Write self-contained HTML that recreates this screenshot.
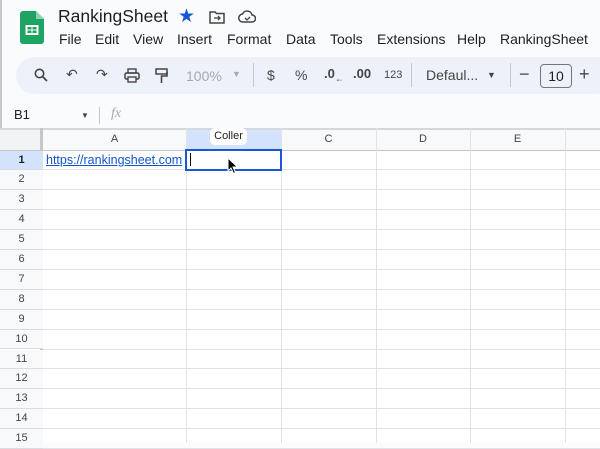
<!DOCTYPE html><html><head><style>
body{margin:0;width:600px;height:443px;overflow:hidden;background:#f9fbfd;font-family:"Liberation Sans",Arial,sans-serif;position:relative}
.a{position:absolute}
.m{position:absolute;top:31px;font-size:14px;color:#1f1f1f}
.tb{color:#444746;font-size:14px}
.rh{position:absolute;left:0;width:43px;text-align:center;font-size:11px;color:#444;border-bottom:1px solid #dadce0;background:#f8f9fa}
.hl{position:absolute;left:43px;width:557px;height:1px;background:#e1e3e6}
.vl{position:absolute;top:128px;width:1px;height:315px;background:#e1e3e6}
.ch{position:absolute;top:128px;height:22px;line-height:22px;text-align:center;font-size:11px;color:#444}
</style></head><body>
<div class="a" style="left:0;top:0;width:2px;height:443px;background:#c8c8c8"></div>
<svg class="a" style="left:20px;top:11px" width="24" height="33" viewBox="0 0 24 33"><path d="M3 0h13l8 8v22a3 3 0 0 1-3 3H3a3 3 0 0 1-3-3V3a3 3 0 0 1 3-3z" fill="#1ea362"/><path d="M16 0v8h8z" fill="#8ed1b1"/><rect x="5.5" y="14" width="13" height="10" fill="#fff"/><rect x="7.5" y="16" width="4" height="2.5" fill="#1ea362"/><rect x="12.5" y="16" width="4" height="2.5" fill="#1ea362"/><rect x="7.5" y="19.5" width="4" height="2.5" fill="#1ea362"/><rect x="12.5" y="19.5" width="4" height="2.5" fill="#1ea362"/></svg>
<div class="a" style="left:58px;top:6px;font-size:17.5px;color:#1f1f1f">RankingSheet</div>
<div class="a" style="left:178px;top:5px;font-size:19px;color:#1a57d2">★</div>
<svg class="a" style="left:209px;top:10px" width="16" height="14"><path d="M1 2h5l1.5 1.5H15V13H1z" fill="none" stroke="#444" stroke-width="1.5"/><path d="M5 8h6M9 6l2 2-2 2" stroke="#444" stroke-width="1.3" fill="none"/></svg>
<svg class="a" style="left:238px;top:10px" width="18" height="13"><path d="M5 12a4 4 0 0 1-.5-8A5 5 0 0 1 14 5a3.5 3.5 0 0 1 0 7z" fill="none" stroke="#444" stroke-width="1.5"/><path d="M7 8l2 2 3-3" fill="none" stroke="#444" stroke-width="1.3"/></svg>
<div class="m" style="left:59px">File</div><div class="m" style="left:95px">Edit</div><div class="m" style="left:133px">View</div><div class="m" style="left:177px">Insert</div><div class="m" style="left:227px">Format</div><div class="m" style="left:286px">Data</div><div class="m" style="left:330px">Tools</div><div class="m" style="left:377px">Extensions</div><div class="m" style="left:457px">Help</div><div class="m" style="left:500px">RankingSheet</div>
<div class="a" style="left:16px;top:57px;width:600px;height:37px;border-radius:19px;background:#edf2fa"></div>
<svg class="a" style="left:34px;top:68px" width="14" height="14"><circle cx="5.5" cy="5.5" r="4.2" fill="none" stroke="#444" stroke-width="1.6"/><path d="M8.5 8.5l4.5 4.5" stroke="#444" stroke-width="1.8"/></svg>
<div class="a tb" style="left:66px;top:66px">↶</div>
<div class="a tb" style="left:96px;top:66px">↷</div>
<svg class="a" style="left:124px;top:68px" width="16" height="15"><rect x="4" y="1" width="8" height="4" fill="none" stroke="#444" stroke-width="1.4"/><rect x="1" y="5" width="14" height="6" rx="1.5" fill="none" stroke="#444" stroke-width="1.5"/><rect x="4" y="9" width="8" height="5" fill="#edf2fa" stroke="#444" stroke-width="1.4"/></svg>
<svg class="a" style="left:155px;top:68px" width="13" height="16"><rect x="1" y="1" width="11" height="5" fill="none" stroke="#444" stroke-width="1.5"/><path d="M12 4v4H6.5v7" fill="none" stroke="#444" stroke-width="1.6"/></svg>
<div class="a" style="left:186px;top:68px;font-size:14px;color:#a6a8ab">100%</div>
<div class="a" style="left:232px;top:69px;font-size:9px;color:#a6a8ab">▼</div>
<div class="a" style="left:253px;top:63px;width:1px;height:24px;background:#c7c7c7"></div>
<div class="a tb" style="left:267px;top:67px">$</div>
<div class="a tb" style="left:295px;top:67px">%</div>
<div class="a" style="left:324px;top:66px;font-size:13px;color:#444;font-weight:bold">.0<sub style="font-size:9px">←</sub></div>
<div class="a" style="left:353px;top:66px;font-size:13px;color:#444;font-weight:bold">.00<sub style="font-size:9px"></sub></div>
<div class="a" style="left:384px;top:69px;font-size:11px;color:#444">123</div>
<div class="a" style="left:411px;top:63px;width:1px;height:24px;background:#c7c7c7"></div>
<div class="a" style="left:426px;top:67px;font-size:14px;color:#444">Defaul...</div>
<div class="a" style="left:487px;top:70px;font-size:9px;color:#444">▼</div>
<div class="a" style="left:510px;top:63px;width:1px;height:24px;background:#c7c7c7"></div>
<div class="a tb" style="left:519px;top:64px;font-size:18px">−</div>
<div class="a" style="left:540px;top:64px;width:30px;height:22px;border:1px solid #747775;border-radius:4px;text-align:center;line-height:22px;font-size:14px;color:#1f1f1f">10</div>
<div class="a tb" style="left:579px;top:64px;font-size:18px">+</div>
<div class="a" style="left:14px;top:107px;font-size:13px;color:#1f1f1f">B1</div>
<div class="a" style="left:81px;top:111px;font-size:8px;color:#444">▼</div>
<div class="a" style="left:99px;top:107px;width:1px;height:17px;background:#c7c7c7"></div>
<div class="a" style="left:111px;top:106px;font-size:14px;color:#aaa;font-style:italic;font-family:'Liberation Serif',serif">fx</div>
<div class="a" style="left:0;top:128px;width:600px;height:315px;background:#fff"></div>
<div class="a" style="left:0;top:128px;width:600px;height:22px;background:#f8f9fa;border-bottom:1px solid #c4c7c5"></div>
<div class="a" style="left:0;top:128px;width:43px;height:22px;background:#f1f3f4"></div>
<div class="a" style="left:0;top:128px;width:600px;height:2px;background:#d5d7da"></div>
<div class="a" style="left:186px;top:130px;width:95px;height:20px;background:#d3e3fd"></div>
<div class="a" style="left:40px;top:128px;width:3px;height:315px;background:#c4c7c5"></div>
<div class="ch" style="left:43px;width:143px">A</div>
<div class="ch" style="left:281px;width:95px">C</div>
<div class="ch" style="left:376px;width:94px">D</div>
<div class="ch" style="left:470px;width:95px">E</div>
<div class="a" style="left:210px;top:128px;width:37px;height:17px;background:#fff;border-radius:5px;font-size:11px;text-align:center;line-height:17px;color:#1f1f1f">Coller</div>
<div class="vl" style="left:186px"></div><div class="vl" style="left:281px"></div><div class="vl" style="left:376px"></div><div class="vl" style="left:470px"></div><div class="vl" style="left:565px"></div>
<div id="rows"></div>
<script>
var h='';for(var i=1;i<=15;i++){var t=150.5+(i-1)*19.9;h+='<div class="rh" style="top:'+t+'px;height:18.9px;line-height:19px;'+(i==1?'background:#d3e3fd;font-weight:bold;color:#1f1f1f':'')+'">'+i+'</div><div class="hl" style="top:'+(t+18.9)+'px"></div>';}
document.getElementById('rows').innerHTML=h;
</script>
<div class="a" style="left:46px;top:153px;font-size:12.5px;color:#1155cc;text-decoration:underline">https://rankingsheet.com</div>
<div class="a" style="left:185px;top:149px;width:93px;height:18px;border:2px solid #1a57d2;background:#fff"></div>
<div class="a" style="left:190px;top:153px;width:1px;height:13px;background:#000"></div>
<svg class="a" style="left:227px;top:157px" width="12" height="18"><path d="M1 1v13l3-3 2.5 5.5 2-1L6 10h4.5z" fill="#000" stroke="#fff" stroke-width="1"/></svg>
</body></html>
